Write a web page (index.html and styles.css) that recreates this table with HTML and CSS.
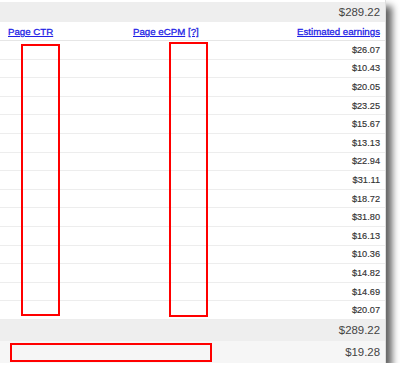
FILE: index.html
```html
<!DOCTYPE html>
<html>
<head>
<meta charset="utf-8">
<link rel="stylesheet" href="styles.css">
</head>
<body>
<div class="panel">
  <div class="band band-top"><span class="big">$289.22</span></div>
  <div class="head">
    <a class="lnk c1" href="#">Page CTR</a>
    <span class="c2"><a class="lnk" href="#">Page eCPM</a> <a class="lnk q" href="#">[?]</a></span>
    <a class="lnk c3" href="#">Estimated earnings</a>
  </div>
  <div class="rows">
    <div class="row">$26.07</div>
    <div class="row">$10.43</div>
    <div class="row">$20.05</div>
    <div class="row">$23.25</div>
    <div class="row">$15.67</div>
    <div class="row">$13.13</div>
    <div class="row">$22.94</div>
    <div class="row">$31.11</div>
    <div class="row">$18.72</div>
    <div class="row">$31.80</div>
    <div class="row">$16.13</div>
    <div class="row">$10.36</div>
    <div class="row">$14.82</div>
    <div class="row">$14.69</div>
    <div class="row">$20.07</div>
  </div>
  <div class="band band-total"><span class="big">$289.22</span></div>
  <div class="band band-avg"><span class="big">$19.28</span></div>

  <div class="redbox rb1"></div>
  <div class="redbox rb2"></div>
  <div class="redbox rb3"></div>
</div>
</body>
</html>
```
FILE: styles.css
```css
html, body {
  margin: 0;
  padding: 0;
  background: #ffffff;
}
body {
  font-family: "Liberation Sans", Arial, sans-serif;
  color: #333333;
}
.panel {
  position: relative;
  width: 385px;
  height: 361px;
  padding-top: 2px;
  background: #ffffff;
  border-right: 1px solid #dddddd;
  box-shadow: 6px 6px 7px rgba(0, 0, 0, 0.62);
}
.band {
  display: flex;
  justify-content: flex-end;
  align-items: center;
  padding-right: 5px;
}
.band-top {
  height: 20px;
  background: #eeeeee;
}
.band-total {
  height: 21px;
  background: #eeeeee;
}
.band-avg {
  height: 22px;
  background: #f6f6f6;
}
.big {
  font-size: 11.4px;
  color: #444444;
}
.head {
  box-sizing: border-box;
  height: 19px;
  display: grid;
  grid-template-columns: 125px 1fr auto;
  align-items: center;
  padding: 1px 5px 0 8px;
  border-bottom: 1px solid #e6e6e6;
  font-size: 9.7px;
}
.lnk {
  color: #1f1fe6;
  text-decoration: underline;
  -webkit-text-stroke: 0.3px #1f1fe6;
}
.q {
  color: #2a2ad0;
}
.c3 {
  justify-self: end;
}
.rows {
  display: flex;
  flex-direction: column;
}
.row {
  box-sizing: border-box;
  height: 18.6px;
  display: flex;
  align-items: center;
  justify-content: flex-end;
  padding-right: 5px;
  border-bottom: 1px solid #ededed;
  font-size: 9.2px;
  color: #333333;
  -webkit-text-stroke: 0.15px #333333;
}
.redbox {
  position: absolute;
  box-sizing: border-box;
  border: 2px solid #ff0000;
}
.rb1 {
  left: 21px;
  top: 44px;
  width: 39px;
  height: 272px;
}
.rb2 {
  left: 169px;
  top: 42px;
  width: 39px;
  height: 275px;
}
.rb3 {
  left: 10px;
  top: 343px;
  width: 202px;
  height: 19px;
}
```
